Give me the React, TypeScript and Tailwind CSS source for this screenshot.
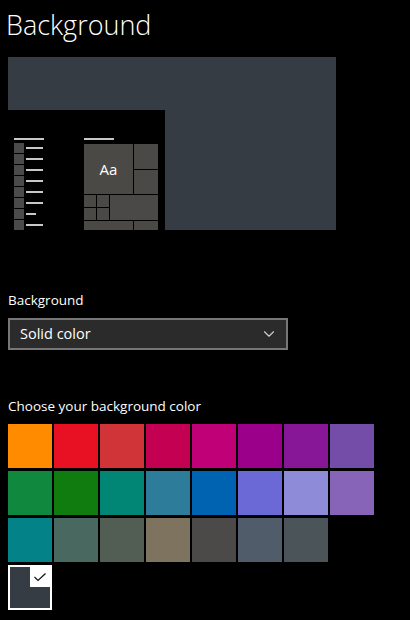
import { ChevronDown } from 'lucide-react'

const swatches = [
  ['#ff8c00', '#e81123', '#d13438', '#c30052', '#bf0077', '#9a0089', '#881798', '#744da9'],
  ['#10893e', '#107c10', '#018574', '#2d7d9a', '#0063b1', '#6b69d6', '#8e8cd8', '#8764b8'],
  ['#038387', '#486860', '#525e54', '#7e735f', '#4c4a48', '#515c6b', '#4a5459'],
]

const listLines = [17, 17, 17, 17, 17, 17, 10, 17]

function Preview() {
  return (
    <div className="ml-2 mt-[11px] flex h-[173px] w-[328px] flex-col justify-end bg-[#363c44]">
      <div className="flex h-[120px] w-[157px] bg-black pl-[6px] pt-[28px]">
        {/* start menu list */}
        <div className="flex w-[30px] flex-col">
          <div className="h-[2px] w-[30px] bg-[#c8c8c8]" />
          <div className="mt-[3px] flex flex-col gap-[1px]">
            {listLines.map((w, i) => (
              <div key={i} className="flex h-[10px] items-center gap-[2px]">
                <div className="h-[10px] w-[10px] bg-[#4a4a4a]" />
                <div className="h-[2px] bg-[#c8c8c8]" style={{ width: w }} />
              </div>
            ))}
          </div>
        </div>
        {/* tiles */}
        <div className="ml-[40px] flex flex-col">
          <div className="h-[2px] w-[30px] bg-[#c8c8c8]" />
          <div className="mt-[4px] flex w-[74px] flex-col gap-[1px]">
            <div className="flex h-[50px] gap-[1px]">
              <div className="flex w-[49px] items-center justify-center bg-[#4b4946] font-['Open_Sans',sans-serif] text-[15px] text-white">
                Aa
              </div>
              <div className="flex w-[24px] flex-col gap-[1px]">
                <div className="h-[25px] bg-[#4b4946]" />
                <div className="h-[24px] bg-[#4b4946]" />
              </div>
            </div>
            <div className="flex h-[25px] gap-[1px]">
              <div className="grid w-[25px] grid-cols-2 gap-[1px]">
                <div className="bg-[#4b4946]" />
                <div className="bg-[#4b4946]" />
                <div className="bg-[#4b4946]" />
                <div className="bg-[#4b4946]" />
              </div>
              <div className="w-[48px] bg-[#4b4946]" />
            </div>
            <div className="flex h-[9px] gap-[1px]">
              <div className="w-[49px] bg-[#4b4946]" />
              <div className="w-[24px] bg-[#4b4946]" />
            </div>
          </div>
        </div>
      </div>
    </div>
  )
}

export default function App() {
  return (
    <div className="h-[620px] w-[410px] overflow-hidden bg-black font-['Open_Sans',sans-serif] text-white">
      <h1 className="pl-[6px] pt-[4px] text-[27px] font-light leading-[42px]">Background</h1>
      <Preview />

      <div className="mt-[60px] px-2 text-[13.5px] leading-[20px]">Background</div>
      <div className="mx-2 mt-[8px] flex h-[32px] w-[280px] items-center justify-between border-2 border-[#767676] bg-[#2b2b2b] pl-[10px] pr-[8px] text-[14.5px]">
        <span>Solid color</span>
        <ChevronDown className="h-[18px] w-[18px] text-[#cfcfcf]" strokeWidth={1.5} />
      </div>

      <div className="mt-[46px] px-2 text-[13.5px] leading-[20px]">Choose your background color</div>
      <div className="ml-2 mt-[8px] flex flex-col gap-[3px]">
        {swatches.map((row, r) => (
          <div key={r} className="flex gap-[2px]">
            {row.map((c) => (
              <div key={c} className="h-[44px] w-[44px]" style={{ backgroundColor: c }} />
            ))}
          </div>
        ))}
        <div className="flex h-[45px] w-[44px] flex-col border-2 border-white bg-[#363c44]">
          <div className="flex h-[20px] justify-end">
            <div className="flex h-[20px] w-[20px] items-center justify-center bg-white">
              <svg width="14" height="10" viewBox="0 0 14 10" fill="none">
                <path d="M1.5 5 L5 8.5 L12.5 1.5" stroke="#111" strokeWidth="1.2" />
              </svg>
            </div>
          </div>
        </div>
      </div>
    </div>
  )
}
